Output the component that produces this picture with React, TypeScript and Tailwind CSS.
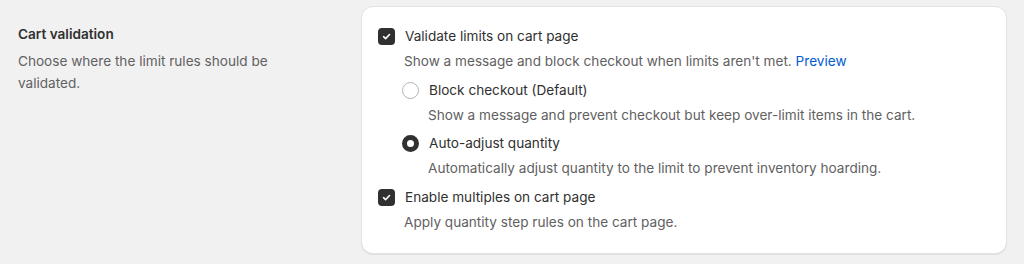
import React from "react";

type OptionProps = {
  label: string;
  help: React.ReactNode;
  control: React.ReactNode;
};

function Option({ label, help, control }: OptionProps) {
  return (
    <div className="flex flex-col">
      <div className="flex h-[20px] items-center gap-[10px]">
        {control}
        <span className="text-[13.6px] leading-[20px] text-[#303030]">{label}</span>
      </div>
      <p className="mt-[5px] pl-[26px] text-[13.6px] leading-[20px] text-[#616161]">{help}</p>
    </div>
  );
}

function Checkbox() {
  return (
    <span className="flex h-[17px] w-[17px] shrink-0 items-center justify-center rounded-[4px] bg-[#303030]">
      <svg viewBox="0 0 12 12" className="h-[11px] w-[11px]" fill="none">
        <path d="M2.8 6.2 5 8.3 9.3 3.8" stroke="white" strokeWidth="1.7" strokeLinecap="round" strokeLinejoin="round" />
      </svg>
    </span>
  );
}

function Radio({ checked }: { checked?: boolean }) {
  return checked ? (
    <span className="block h-[17px] w-[17px] shrink-0 rounded-full border-[5px] border-[#303030] bg-white" />
  ) : (
    <span className="block h-[17px] w-[17px] shrink-0 rounded-full border border-[#b5b5b5] bg-white" />
  );
}

export default function App() {
  return (
    <div
      className="h-[264px] w-[1024px] bg-[#f1f1f1] pl-[18px] pr-[17px] pt-[6px]"
      style={{ fontFamily: "Inter, 'Noto Sans', sans-serif" }}
    >
      <div className="grid grid-cols-[327px_1fr] gap-[16px]">
        <div className="pt-[18px]">
          <h2 className="text-[13.6px] font-semibold leading-[20px] text-[#303030]">Cart validation</h2>
          <p className="mt-[6px] w-[280px] text-[13.6px] leading-[22px] text-[#616161]">
            Choose where the limit rules should be validated.
          </p>
        </div>
        <div className="rounded-[12px] border border-[#e3e3e3] bg-white px-[16px] pb-[21px] pt-[19px] shadow-[0_1px_0_rgba(0,0,0,0.08)]">
          <Option
            control={<Checkbox />}
            label="Validate limits on cart page"
            help={
              <>
                Show a message and block checkout when limits aren't met.{" "}
                <span className="text-[#005bd3]">Preview</span>
              </>
            }
          />
          <div className="mt-[9px] flex flex-col gap-[8px] pl-[24px]">
            <Option
              control={<Radio />}
              label="Block checkout (Default)"
              help="Show a message and prevent checkout but keep over-limit items in the cart."
            />
            <Option
              control={<Radio checked />}
              label="Auto-adjust quantity"
              help="Automatically adjust quantity to the limit to prevent inventory hoarding."
            />
          </div>
          <div className="mt-[9px]">
            <Option
              control={<Checkbox />}
              label="Enable multiples on cart page"
              help="Apply quantity step rules on the cart page."
            />
          </div>
        </div>
      </div>
    </div>
  );
}
